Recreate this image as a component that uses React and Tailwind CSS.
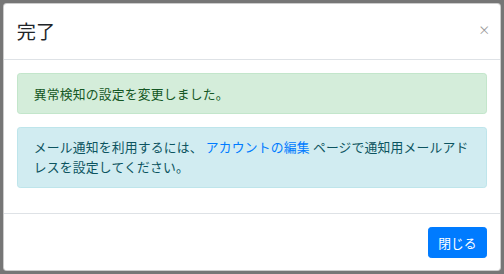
export default function App() {
  return (
    <div
      className="w-[504px] h-[274px] bg-[#767676] p-[3px] overflow-hidden"
      style={{ fontFamily: '"Noto Sans CJK JP", "Noto Sans", sans-serif' }}
    >
      <div className="w-[498px] bg-white rounded-[3.8px] border border-black/20 text-[#212529]">
        <div className="flex items-center justify-between px-[12.8px] py-[13px] border-b border-[#dee2e6]">
          <h4 className="text-[19.2px] leading-[28.8px] font-normal">完了</h4>
          <button type="button" className="text-[12px] leading-none text-[#999] mr-[-3px] mb-[2px]">
            ×
          </button>
        </div>

        <div className="px-[12.8px] pt-[13.2px] pb-0 tracking-[0.2px]">
          <div className="bg-[#d4edda] border border-[#c3e6cb] text-[#155724] rounded-[3.2px] px-[16px] py-[9.6px] mb-[12.8px] text-[12.8px] leading-[19.8px]">
            異常検知の設定を変更しました。
          </div>
          <div className="bg-[#d1ecf1] border border-[#bee5eb] text-[#0c5460] rounded-[3.2px] px-[16px] py-[9.6px] mb-[12.8px] text-[12.8px] leading-[20px]">
            メール通知を利用するには、 <a className="text-[#007bff]">アカウントの編集</a> ページで通知用メールアドレスを設定してください。
          </div>
          <div className="h-[12.3px]" />
        </div>

        <div className="flex justify-end border-t border-[#dee2e6] p-[9.6px]">
          <button
            type="button"
            className="m-[3.2px] bg-[#007bff] border border-[#007bff] text-white rounded-[3.2px] px-[9.6px] py-[4.8px] text-[12.8px] leading-[19.2px]"
          >
            閉じる
          </button>
        </div>
      </div>
    </div>
  )
}
